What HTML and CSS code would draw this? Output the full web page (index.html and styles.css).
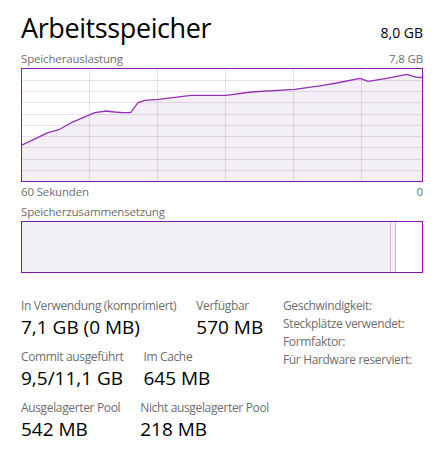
FILE: index.html
```html
<!DOCTYPE html>
<html lang="de">
<head>
<meta charset="utf-8">
<title>Arbeitsspeicher</title>
<link rel="stylesheet" href="styles.css">
</head>
<body>
<div class="page">
  <div class="header">
    <div class="title">Arbeitsspeicher</div>
    <div class="total">8,0 GB</div>
  </div>
  <div class="caption-row">
    <span>Speicherauslastung</span>
    <span>7,8 GB</span>
  </div>
  <div class="graph">
    <svg class="graph-svg" width="400" height="112" viewBox="22 69 400 112" preserveAspectRatio="none">
      <polygon class="area" points="21,145.5 48,132.7 59.7,129.3 71.3,122.7 94.7,112.7 106.3,111 114.7,112 123,112.7 130.7,112.7 138,102.7 144.7,100.3 158,99.3 191.3,95.3 226,95.3 251.3,92 294.7,89.3 323,85.3 336.7,83 360,78.3 368.3,81.3 386.7,78.3 406.7,74.3 416.7,77.3 423,77.3 423,182 21,182"/>
      <g class="grid">
        <line x1="89.5" y1="69" x2="89.5" y2="181"/>
        <line x1="157.5" y1="69" x2="157.5" y2="181"/>
        <line x1="225.5" y1="69" x2="225.5" y2="181"/>
        <line x1="293.5" y1="69" x2="293.5" y2="181"/>
        <line x1="361.5" y1="69" x2="361.5" y2="181"/>
        <line x1="22" y1="80.5" x2="422" y2="80.5"/>
        <line x1="22" y1="91.5" x2="422" y2="91.5"/>
        <line x1="22" y1="102.5" x2="422" y2="102.5"/>
        <line x1="22" y1="114.5" x2="422" y2="114.5"/>
        <line x1="22" y1="125.5" x2="422" y2="125.5"/>
        <line x1="22" y1="136.5" x2="422" y2="136.5"/>
        <line x1="22" y1="147.5" x2="422" y2="147.5"/>
        <line x1="22" y1="159.5" x2="422" y2="159.5"/>
        <line x1="22" y1="170.5" x2="422" y2="170.5"/>
      </g>
      <polyline class="curve" points="21,145.5 48,132.7 59.7,129.3 71.3,122.7 94.7,112.7 106.3,111 114.7,112 123,112.7 130.7,112.7 138,102.7 144.7,100.3 158,99.3 191.3,95.3 226,95.3 251.3,92 294.7,89.3 323,85.3 336.7,83 360,78.3 368.3,81.3 386.7,78.3 406.7,74.3 416.7,77.3 423,77.3"/>
    </svg>
  </div>
  <div class="axis-row">
    <span>60 Sekunden</span>
    <span>0</span>
  </div>
  <div class="caption">Speicherzusammensetzung</div>
  <div class="composition">
    <div class="seg-used"></div>
    <div class="seg-standby"></div>
    <div class="seg-free"></div>
  </div>
  <div class="stats">
    <div class="stats-left">
      <div class="stat-row">
        <div class="stat"><div class="label">In Verwendung (komprimiert)</div><div class="value">7,1 GB (0 MB)</div></div>
        <div class="stat"><div class="label">Verfügbar</div><div class="value">570 MB</div></div>
      </div>
      <div class="stat-row">
        <div class="stat"><div class="label">Commit ausgeführt</div><div class="value">9,5/11,1 GB</div></div>
        <div class="stat"><div class="label">Im Cache</div><div class="value">645 MB</div></div>
      </div>
      <div class="stat-row">
        <div class="stat"><div class="label">Ausgelagerter Pool</div><div class="value">542 MB</div></div>
        <div class="stat"><div class="label">Nicht ausgelagerter Pool</div><div class="value">218 MB</div></div>
      </div>
    </div>
    <div class="stats-right">
      <div class="prop">Geschwindigkeit:</div>
      <div class="prop">Steckplätze verwendet:</div>
      <div class="prop">Formfaktor:</div>
      <div class="prop">Für Hardware reserviert:</div>
    </div>
  </div>
</div>
</body>
</html>
```
FILE: styles.css
```css
html, body {
  margin: 0;
  padding: 0;
  background: #ffffff;
}
body {
  font-family: "Open Sans", "Noto Sans", "DejaVu Sans", sans-serif;
  color: #000;
  width: 435px;
  height: 449px;
  overflow: hidden;
}
.page {
  padding: 0 12px 0 21px;
}
.header {
  display: flex;
  justify-content: space-between;
  align-items: baseline;
  padding-top: 10px;
  height: 38px;
}
.title {
  font-size: 27px;
  line-height: 36px;
  letter-spacing: -0.4px;
}
.total {
  font-size: 14px;
  line-height: 20px;
}
.caption-row, .axis-row, .caption {
  font-size: 11.5px;
  line-height: 16px;
  letter-spacing: -0.15px;
  color: #6e6e6e;
}
.caption-row, .axis-row {
  display: flex;
  justify-content: space-between;
}
.caption-row {
  height: 20px;
  padding-top: 3px;
  box-sizing: border-box;
}
.graph {
  width: 400px;
  height: 112px;
  border: 1px solid #8b12ae;
}
.graph-svg {
  display: block;
}
.area {
  fill: #f2f0f4;
}
.grid line {
  stroke: rgba(139, 18, 174, 0.14);
  stroke-width: 1;
}
.curve {
  fill: none;
  stroke: #9530b5;
  stroke-width: 1.3;
  stroke-linejoin: round;
}
.axis-row {
  height: 21px;
  padding-top: 2px;
  box-sizing: border-box;
}
.caption {
  height: 18px;
  padding-top: 1px;
  box-sizing: border-box;
}
.composition {
  display: flex;
  width: 400px;
  height: 50px;
  border: 1px solid #8b12ae;
}
.seg-used {
  width: 368px;
  background: #f2f0f4;
}
.seg-standby {
  width: 4px;
  background: #f6eef8;
  border-left: 1px solid #d7b5e2;
  border-right: 1px solid #d7b5e2;
}
.seg-free {
  flex: 1;
  background: #ffffff;
}
.stats {
  display: grid;
  grid-template-columns: 262px auto;
  padding-top: 24px;
}
.stats-left {
  display: flex;
  flex-direction: column;
}
.stat-row {
  display: flex;
  gap: 20px;
  height: 51px;
}
.label {
  font-size: 12px;
  line-height: 17px;
  letter-spacing: -0.35px;
  color: #6e6e6e;
  white-space: nowrap;
}
.value {
  font-size: 19px;
  line-height: 26px;
  white-space: nowrap;
}
.prop {
  font-size: 12px;
  line-height: 18px;
  letter-spacing: -0.35px;
  color: #6e6e6e;
  white-space: nowrap;
}
```
